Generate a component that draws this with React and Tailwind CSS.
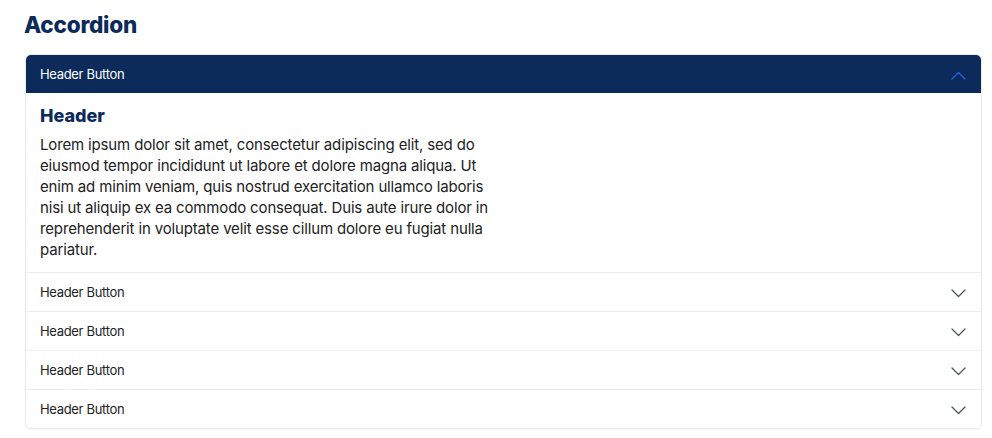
import React, { useState } from 'react';

const items = [
    {
        title: 'Header',
        body: 'Lorem ipsum dolor sit amet, consectetur adipiscing elit, sed do eiusmod tempor incididunt ut labore et dolore magna aliqua. Ut enim ad minim veniam, quis nostrud exercitation ullamco laboris nisi ut aliquip ex ea commodo consequat. Duis aute irure dolor in reprehenderit in voluptate velit esse cillum dolore eu fugiat nulla pariatur.'
    },
    { title: 'Header', body: 'Lorem ipsum dolor sit amet.' },
    { title: 'Header', body: 'Lorem ipsum dolor sit amet.' },
    { title: 'Header', body: 'Lorem ipsum dolor sit amet.' },
    { title: 'Header', body: 'Lorem ipsum dolor sit amet.' }
];

const Chevron = ({ up }) => (
    <svg width="15" height="9" viewBox="0 0 15 9" fill="none" className={up ? 'text-[#2563eb]' : 'text-[#4b5563]'}>
        <path d={up ? 'M1 8l6.5-6.5L14 8' : 'M1 1l6.5 6.5L14 1'} stroke="currentColor" strokeWidth="1.25" strokeLinecap="round" strokeLinejoin="round" />
    </svg>
);

const App = () => {
    const [open, setOpen] = useState(0);

    return (
        <div className="min-h-screen bg-white pl-6 pr-[10px] pt-[9px] font-['Inter',sans-serif]">
            <h1 className="text-[22.5px] leading-[32px] font-extrabold text-[#0c2a5a] tracking-[-0.01em]">Accordion</h1>

            <div className="mt-[13px] ml-px border border-[#e7e9ec] rounded-md shadow-[0_1px_2px_rgba(0,0,0,0.04)] overflow-hidden">
                {items.map((item, i) => {
                    const isOpen = open === i;
                    return (
                        <div key={i} className={i > 0 ? 'border-t border-[#eceef0]' : ''}>
                            <button
                                onClick={() => setOpen(isOpen ? -1 : i)}
                                className={`w-full h-[38px] flex items-center justify-between pl-[14px] pr-[15px] pt-[2px] text-[13px] tracking-[-0.025em] ${isOpen ? 'bg-[#0c2a5a] text-white' : 'bg-white text-[#222]'}`}
                            >
                                <span>Header Button</span>
                                <Chevron up={isOpen} />
                            </button>
                            {isOpen && (
                                <div className="pl-[14px] pr-4 pt-[9px] pb-[12px]">
                                    <h2 className="text-[18px] leading-[28px] font-extrabold text-[#0c2a5a]">{item.title}</h2>
                                    <p className="mt-[4px] max-w-[462px] text-[15px] leading-[21px] tracking-[-0.01em] text-[#222]">{item.body}</p>
                                </div>
                            )}
                        </div>
                    );
                })}
            </div>
        </div>
    );
};

export default App;
